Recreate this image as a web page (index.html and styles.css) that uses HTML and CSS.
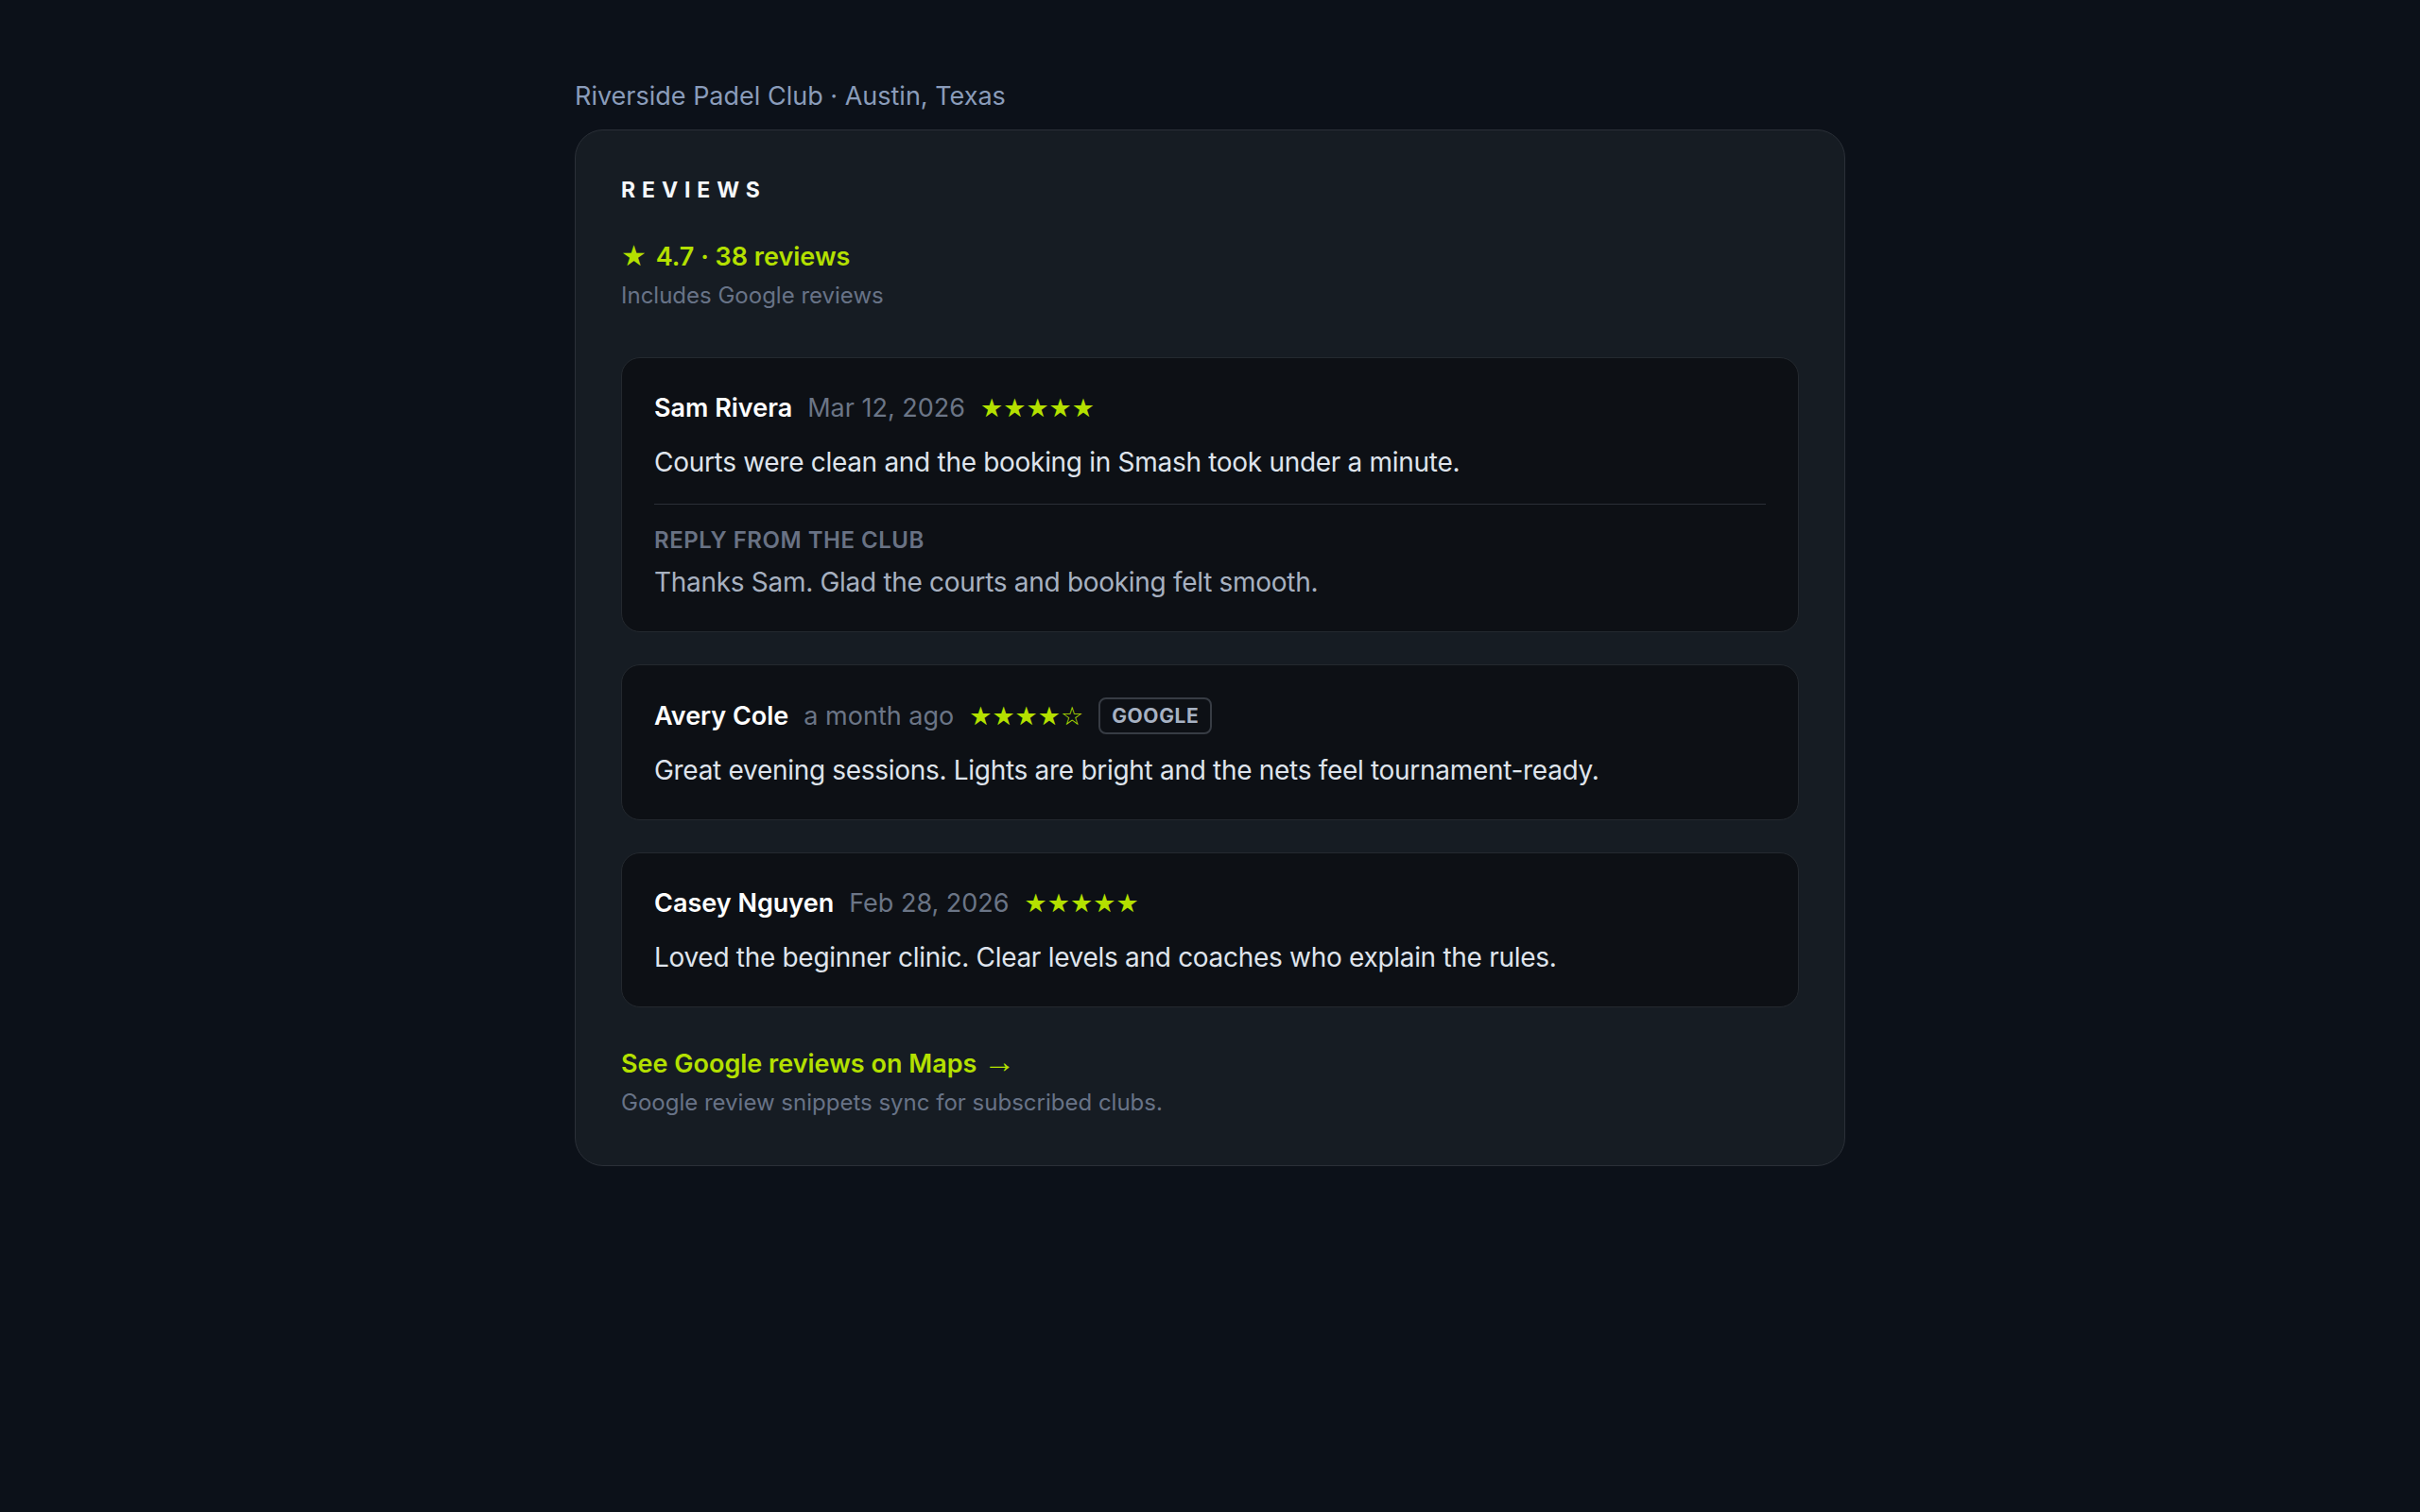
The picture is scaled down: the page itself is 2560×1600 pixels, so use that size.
FILE: index.html
```html
<!DOCTYPE html>
<html lang="en">
<head>
<meta charset="utf-8">
<title>Riverside Padel Club · Reviews</title>
<link rel="stylesheet" href="styles.css">
</head>
<body>
<main class="page">
  <p class="club-line">Riverside Padel Club · Austin, Texas</p>

  <section class="reviews-card">
    <h2 class="reviews-title">Reviews</h2>

    <div class="summary">
      <p class="summary-score"><span class="summary-star">★</span> 4.7 · 38 reviews</p>
      <p class="summary-note">Includes Google reviews</p>
    </div>

    <ul class="review-list">
      <li class="review">
        <div class="review-head">
          <span class="review-name">Sam Rivera</span>
          <span class="review-date">Mar 12, 2026</span>
          <span class="review-stars">★★★★★</span>
        </div>
        <p class="review-text">Courts were clean and the booking in Smash took under a minute.</p>
        <div class="review-reply">
          <p class="reply-label">Reply from the club</p>
          <p class="reply-text">Thanks Sam. Glad the courts and booking felt smooth.</p>
        </div>
      </li>

      <li class="review">
        <div class="review-head">
          <span class="review-name">Avery Cole</span>
          <span class="review-date">a month ago</span>
          <span class="review-stars">★★★★☆</span>
          <span class="source-badge">Google</span>
        </div>
        <p class="review-text">Great evening sessions. Lights are bright and the nets feel tournament-ready.</p>
      </li>

      <li class="review">
        <div class="review-head">
          <span class="review-name">Casey Nguyen</span>
          <span class="review-date">Feb 28, 2026</span>
          <span class="review-stars">★★★★★</span>
        </div>
        <p class="review-text">Loved the beginner clinic. Clear levels and coaches who explain the rules.</p>
      </li>
    </ul>

    <div class="reviews-footer">
      <a class="maps-link" href="#">See Google reviews on Maps <span class="maps-arrow">→</span></a>
      <p class="sync-note">Google review snippets sync for subscribed clubs.</p>
    </div>
  </section>
</main>
</body>
</html>
```

FILE: styles.css
```css
* {
  box-sizing: border-box;
}

html,
body {
  margin: 0;
  background: #0c1119;
}

body {
  font-family: Inter, "Noto Sans", sans-serif;
  color: #dfe4ec;
}

p,
h2,
ul {
  margin: 0;
  padding: 0;
}

.page {
  width: 1344px;
  margin: 0 auto;
  padding-top: 84px;
  display: flex;
  flex-direction: column;
  gap: 17px;
}

.club-line {
  font-size: 27px;
  line-height: 36px;
  color: #8a9cba;
}

.reviews-card {
  background: #161c23;
  border: 1px solid #2b3038;
  border-radius: 30px;
  padding: 48px 48px 51px;
  display: flex;
  flex-direction: column;
}

.reviews-title {
  font-size: 23px;
  line-height: 30px;
  font-weight: 700;
  letter-spacing: 0.3em;
  text-transform: uppercase;
  color: #f5f7fa;
}

.summary {
  margin-top: 38px;
  display: flex;
  flex-direction: column;
  gap: 8px;
}

.summary-score {
  font-size: 27px;
  line-height: 36px;
  font-weight: 600;
  color: #b4e000;
}

.summary-star {
  font-family: "DejaVu Sans", sans-serif;
  font-size: 30px;
  line-height: 0;
  margin-right: 3px;
}

.summary-note {
  font-size: 24px;
  line-height: 30px;
  color: #687387;
}

.review-list {
  list-style: none;
  margin-top: 50px;
  display: flex;
  flex-direction: column;
  gap: 34px;
}

.review {
  background: #0d1015;
  border: 1px solid #24292f;
  border-radius: 20px;
  padding: 34px;
  display: flex;
  flex-direction: column;
  gap: 20px;
}

.review-head {
  display: flex;
  align-items: center;
  gap: 16px;
  min-height: 38px;
}

.review-name {
  font-size: 27px;
  line-height: 36px;
  font-weight: 600;
  color: #ffffff;
}

.review-date {
  font-size: 27px;
  line-height: 36px;
  color: #6b7586;
}

.review-stars {
  font-family: "DejaVu Sans", sans-serif;
  font-size: 27px;
  line-height: 36px;
  color: #b4e000;
  letter-spacing: 0;
}

.source-badge {
  border: 2px solid #373c44;
  border-radius: 8px;
  padding: 0 12px;
  height: 39px;
  display: inline-flex;
  align-items: center;
  font-size: 21px;
  font-weight: 700;
  text-transform: uppercase;
  color: #a7b2c3;
  letter-spacing: 0.6px;
}

.review-text {
  font-size: 28px;
  line-height: 36px;
  color: #dfe4ec;
  letter-spacing: -0.3px;
}

.review-reply {
  margin-top: 6px;
  border-top: 1px solid #2a2f36;
  padding-top: 23px;
  display: flex;
  flex-direction: column;
  gap: 11px;
}

.reply-label {
  font-size: 24px;
  line-height: 30px;
  font-weight: 600;
  text-transform: uppercase;
  color: #697284;
  letter-spacing: 0.5px;
}

.reply-text {
  font-size: 28px;
  line-height: 36px;
  color: #a7b1c0;
  letter-spacing: -0.3px;
}

.reviews-footer {
  margin-top: 42px;
  display: flex;
  flex-direction: column;
  gap: 8px;
}

.maps-link {
  font-size: 27px;
  line-height: 36px;
  font-weight: 600;
  color: #b4e000;
  text-decoration: none;
}

.maps-arrow {
  font-family: "Liberation Sans", sans-serif;
  font-weight: 400;
  font-size: 34px;
  line-height: 0;
}

.sync-note {
  font-size: 24px;
  line-height: 30px;
  color: #687387;
}
```
